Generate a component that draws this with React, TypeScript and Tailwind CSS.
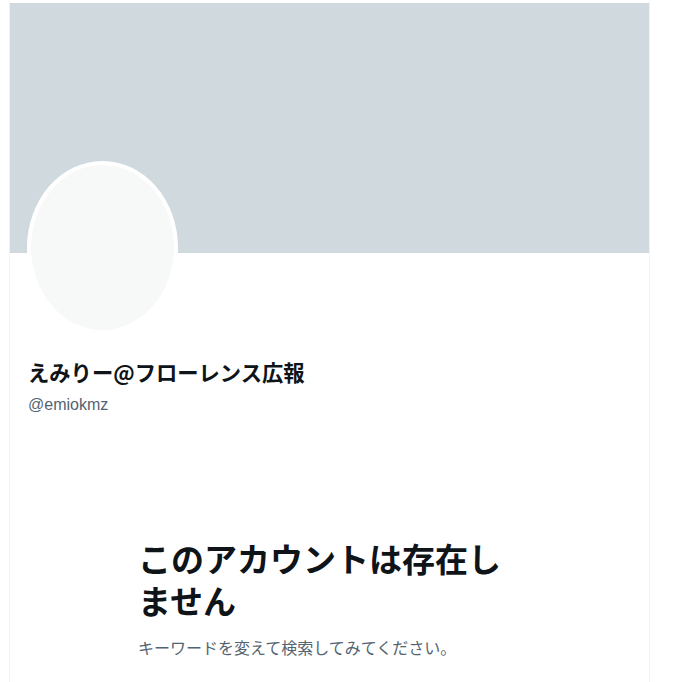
const jp = "font-['Noto_Sans_CJK_JP','Noto_Sans',sans-serif]";

export default function App() {
  return (
    <div className="min-h-[682px] bg-white">
      <div className="ml-[9px] w-[641px] min-h-[682px] border-x border-[#eff3f4] pt-[3px]">
        <div className="h-[250px] bg-[#cfd9de]" />
        <div className="-mt-[92px] ml-[17px] h-[173px] w-[151px] rounded-[50%] border-4 border-white bg-[#f7f9f9]" />
        <div className="pl-[18px] pt-[24px]">
          <div className={`${jp} text-[21.3px] font-bold leading-[28px] text-[#0f1419]`}>
            えみりー@フローレンス広報
          </div>
          <div className="font-['Liberation_Sans',sans-serif] text-[16px] leading-[20px] text-[#536471] mt-[9px]">
            @emiokmz
          </div>
        </div>
        <div className="pl-[128px] pt-[122px]">
          <h1 className={`${jp} max-w-[370px] text-[33px] font-bold leading-[42px] text-[#0f1419]`}>
            このアカウントは存在しません
          </h1>
          <p className={`${jp} mt-[16px] text-[16px] leading-[20px] text-[#536471]`}>
            キーワードを変えて検索してみてください。
          </p>
        </div>
      </div>
    </div>
  );
}
